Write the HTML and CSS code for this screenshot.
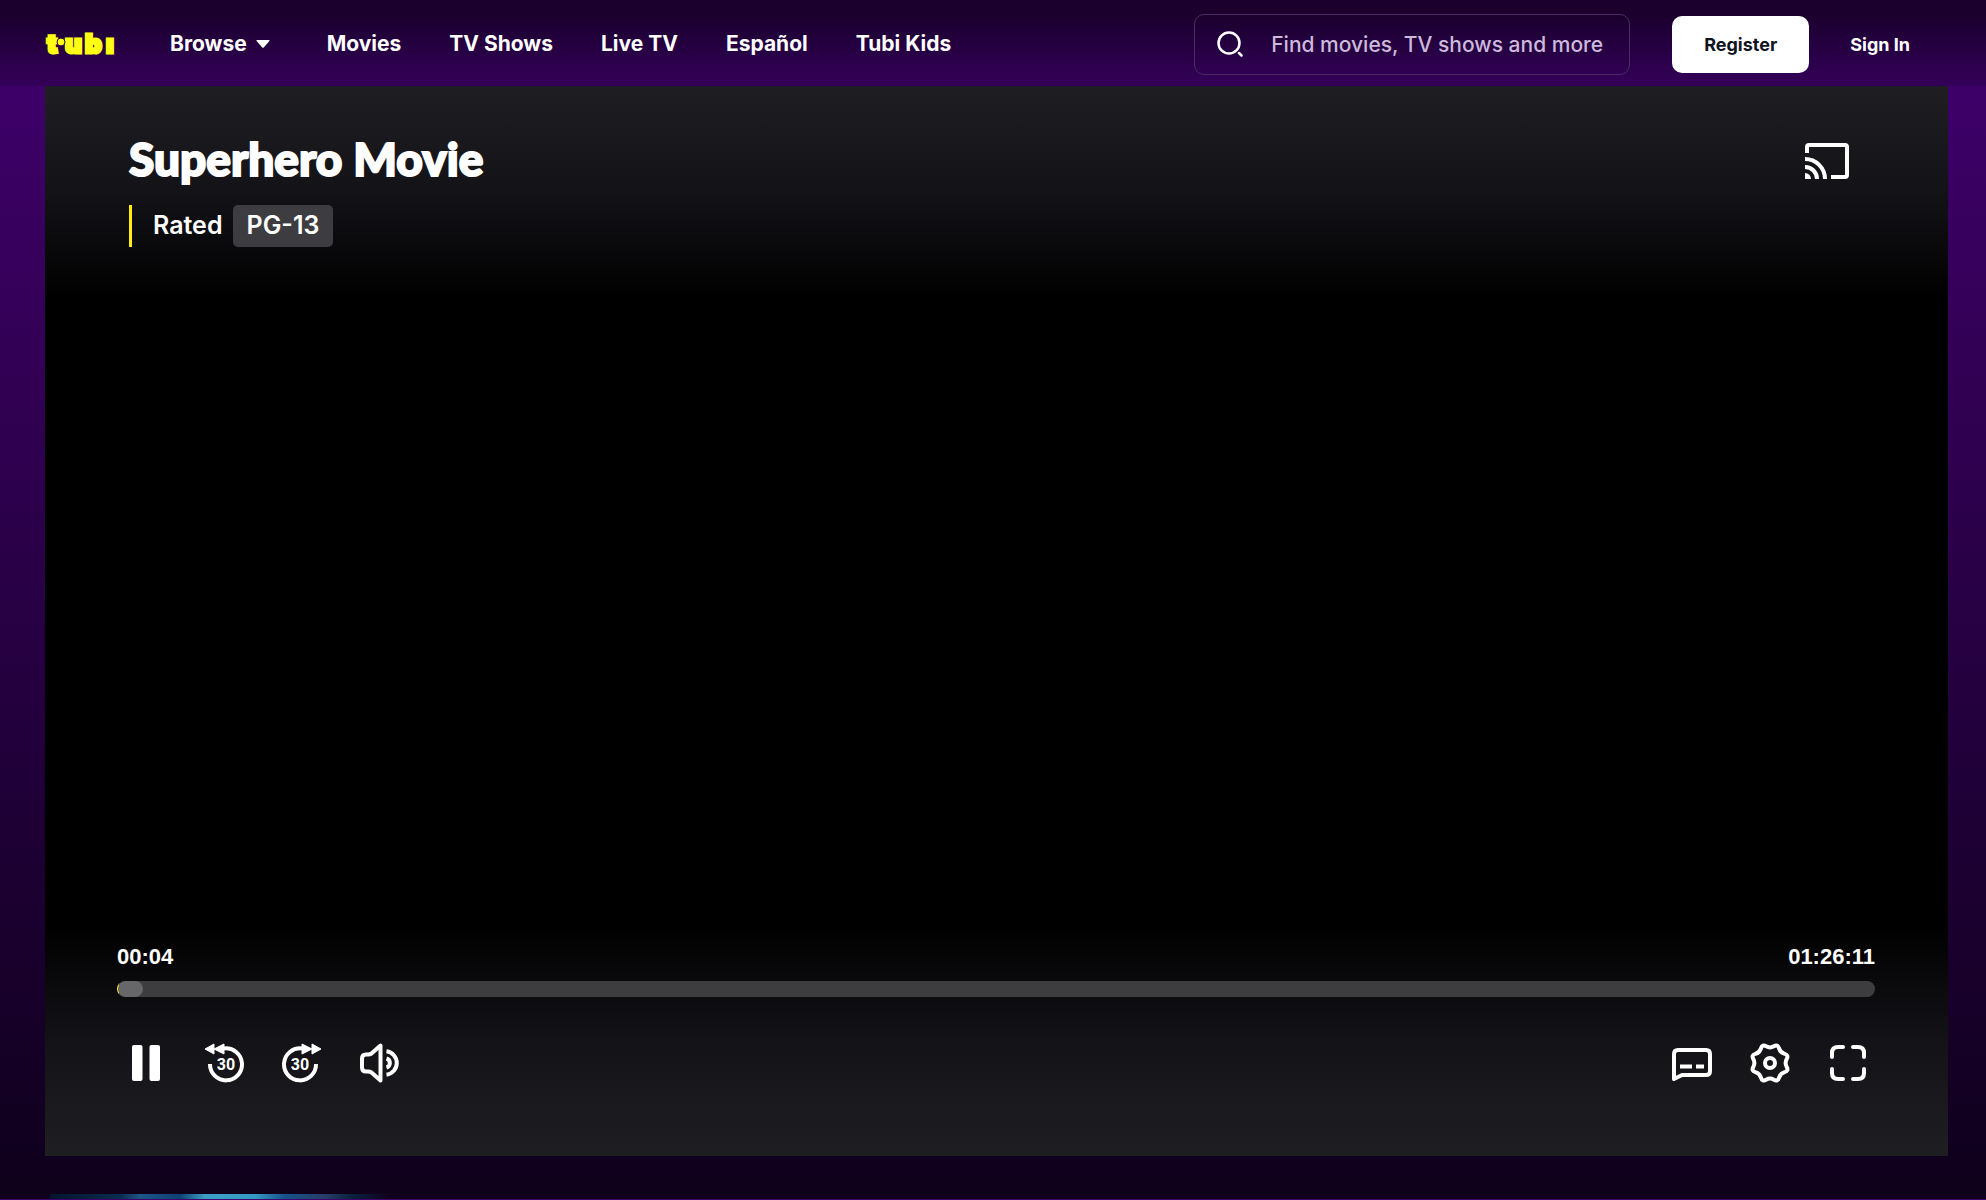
FILE: index.html
```html
<!DOCTYPE html>
<html lang="en">
<head>
<meta charset="utf-8">
<meta name="viewport" content="width=device-width, initial-scale=1">
<title>Superhero Movie</title>
<link rel="stylesheet" href="styles.css">
</head>
<body>
<header class="header">
  <a class="logo" href="#" aria-label="Tubi home">
    <svg width="72" height="44" viewBox="0 0 72 44" aria-hidden="true">
      <g class="logo-text"><text x="2" y="31">t</text><text x="20" y="31">u</text><text x="40" y="31">b</text><text x="61" y="31">ı</text></g>
      <circle class="logo-dot" cx="16" cy="20" r="4"/>
    </svg>
  </a>
  <nav class="nav">
    <a class="nav-link" href="#">Browse
      <svg width="14" height="8" viewBox="0 0 14 8" aria-hidden="true"><path d="M1 0h12q1 0 .4.9L8 7.300q-1 1-2 0L.6.9Q0 0 1 0z" fill="currentColor"/></svg>
    </a>
    <a class="nav-link" href="#">Movies</a>
    <a class="nav-link" href="#">TV Shows</a>
    <a class="nav-link" href="#">Live TV</a>
    <a class="nav-link" href="#">Español</a>
    <a class="nav-link" href="#">Tubi Kids</a>
  </nav>
  <label class="search">
    <svg width="26" height="26" viewBox="0 0 26 26" fill="none" stroke="currentColor" stroke-width="2.500" aria-hidden="true"><circle cx="12" cy="12" r="10.500"/><path d="M22 22l2.500 2.500" stroke-linecap="round"/></svg>
    <input class="search-input" type="text" aria-label="Search" placeholder="Find movies, TV shows and more">
  </label>
  <button class="register" type="button">Register</button>
  <a class="sign-in" href="#">Sign In</a>
</header>

<main>
  <section class="player" aria-label="Video player">
    <div class="player-top">
      <div>
        <h1 class="title">Superhero Movie</h1>
        <p class="rating">Rated <span class="badge">PG-13</span></p>
      </div>
      <button class="icon-button cast" type="button" aria-label="Cast">
        <svg width="44" height="36" viewBox="0 0 44 36" fill="none" stroke="currentColor" stroke-width="4" aria-hidden="true"><path d="M2 10V4q0-2 2-2h36q2 0 2 2v28q0 2-2 2H26M0 16a20 20 0 0 1 20 20M0 24a12 12 0 0 1 12 12"/><path d="M0 30a6 6 0 0 1 6 6H0z" fill="currentColor" stroke="none"/></svg>
      </button>
    </div>

    <div class="player-bottom">
      <div class="times"><span>00:04</span><span>01:26:11</span></div>
      <input class="progress" type="range" min="0" max="5171" value="4" aria-label="Seek">
      <div class="controls">
        <div class="control-group">
          <button class="icon-button" type="button" aria-label="Pause">
            <svg width="40" height="40" viewBox="0 0 40 40" fill="currentColor" aria-hidden="true"><rect x="6" y="2" width="10.500" height="36" rx="2"/><rect x="23.500" y="2" width="10.500" height="36" rx="2"/></svg>
          </button>
          <button class="icon-button" type="button" aria-label="Rewind 30 seconds">
            <svg width="40" height="40" viewBox="0 0 40 40" aria-hidden="true"><path d="M20 5.500A16 16 0 1 1 6 21" class="line"/><path d="M1 6l9-5v10zM10 6l10-5v10z" class="solid"/><text class="skip-text" x="22" y="27">30</text></svg>
          </button>
          <button class="icon-button" type="button" aria-label="Forward 30 seconds">
            <svg width="40" height="40" viewBox="0 0 40 40" aria-hidden="true"><path d="M20 5.500A16 16 0 1 0 34 21" class="line"/><path d="M39 6l-9-5v10zM30 6l-10-5v10z" class="solid"/><text class="skip-text" x="18" y="27">30</text></svg>
          </button>
          <button class="icon-button" type="button" aria-label="Volume">
            <svg width="40" height="40" viewBox="0 0 40 40" aria-hidden="true"><path d="M20.500 2.500v35l-9-8Q10 28.500 8 28.500H6Q2 28.500 2 24.500v-9Q2 11.500 6 11.500h2q2 0 3.500-1z" class="line"/><path d="M26.500 8.300a11.800 11.800 0 0 1 0 23.400" class="line"/><path d="M26.500 15.500a4.700 4.700 0 0 1 0 9" class="line"/></svg>
          </button>
        </div>
        <div class="control-group">
          <button class="icon-button" type="button" aria-label="Subtitles">
            <svg width="40" height="40" viewBox="0 0 40 40" aria-hidden="true"><path d="M2 36V11q0-4 4-4h28q4 0 4 4v17q0 4-4 4H10z" class="line"/><path d="M8 23.500h12M24 23.500h8" class="line"/></svg>
          </button>
          <button class="icon-button" type="button" aria-label="Settings">
            <svg width="40" height="40" viewBox="-20 -20 40 40" aria-hidden="true"><path class="line" d="M16.700 3.900Q18.900 7.800 14.600 9.050Q10.300 10.300 9.050 14.600Q7.800 18.900 3.900 16.700Q0 14.500-3.900 16.700Q-7.800 18.900-9.050 14.600Q-10.300 10.300-14.600 9.050Q-18.900 7.800-16.700 3.900Q-14.500 0-16.700-3.900Q-18.900-7.800-14.600-9.050Q-10.300-10.300-9.050-14.600Q-7.800-18.900-3.900-16.700Q0-14.500 3.900-16.700Q7.800-18.900 9.050-14.600Q10.300-10.300 14.600-9.050Q18.900-7.800 16.700-3.900Q14.500 0 16.700 3.900z"/><circle class="line" r="5"/></svg>
          </button>
          <button class="icon-button" type="button" aria-label="Full screen">
            <svg width="40" height="40" viewBox="0 0 40 40" aria-hidden="true"><path class="line" stroke-linecap="round" d="M4 14v-4q0-6 6-6h5M25 4h5q6 0 6 6v4M36 26v4q0 6-6 6h-5M15 36h-5q-6 0-6-6v-4"/></svg>
          </button>
        </div>
      </div>
    </div>
  </section>
  <section class="artwork" aria-label="Artwork"></section>
</main>
</body>
</html>
```
FILE: styles.css
```css
* {
  box-sizing: border-box;
}

body {
  margin: 0;
  color: #fff;
  font-family: Inter, "Liberation Sans", sans-serif;
  background: linear-gradient(#400070, #390060 200px, #10001e 1160px, #0f001b 1200px) #0f001b;
}

a {
  color: inherit;
  text-decoration: none;
}

.header {
  display: flex;
  align-items: center;
  height: 86px;
  padding: 2px 76px 0 45px;
  background: linear-gradient(#1b002d 15px, #24003f 50%, #340059);
}

.logo {
  display: flex;
  margin-right: 53px;
  fill: #ffff13;
}

.logo-text {
  font: 900 26px Inter, sans-serif;
  stroke: #ffff13;
  stroke-width: 3px;
}

.logo-dot {
  stroke: #28004a;
  stroke-width: 1px;
}

.nav {
  display: flex;
  flex: 1;
  gap: 48px;
}

.nav-link {
  display: flex;
  align-items: center;
  gap: 9px;
  font-size: 21px;
  font-weight: 700;
  line-height: 28px;
  white-space: nowrap;
}

.nav-link:first-child {
  margin-right: 9px;
}

.search {
  display: flex;
  align-items: center;
  gap: 28px;
  width: 436px;
  height: 61px;
  margin-right: 42px;
  padding: 0 8px 0 22px;
  border: 1px solid #4c2a66;
  border-radius: 10px;
}

.search svg {
  flex: none;
}

.search-input {
  flex: 1;
  min-width: 0;
  padding: 0;
  border: 0;
  outline: 0;
  background: none;
  color: #fff;
  font: 500 21px Inter, sans-serif;
}

.search-input::placeholder {
  color: #cdb9dc;
  opacity: 1;
}

.register {
  width: 137px;
  height: 57px;
  margin-right: 41px;
  padding: 0;
  border: 0;
  border-radius: 10px;
  background: #fff;
  color: #10141f;
  font: 700 18px Inter, sans-serif;
}

.sign-in {
  font-size: 18px;
  font-weight: 700;
  white-space: nowrap;
}

.player {
  display: flex;
  flex-direction: column;
  justify-content: space-between;
  aspect-ratio: 16 / 9;
  margin: 0 38px 0 45px;
  background: #000;
}

.player-top {
  display: flex;
  justify-content: space-between;
  align-items: flex-start;
  height: 214px;
  padding: 47px 99px 0 84px;
  background: linear-gradient(#1e1e23, #131217 50%, #000);
}

.title {
  margin: 0 0 20px;
  font: 900 46px/52px Lato, sans-serif;
  -webkit-text-stroke: 2px #fff;
}

.rating {
  display: flex;
  gap: 10px;
  height: 42px;
  margin: 0;
  padding-left: 21px;
  border-left: 3px solid #ffed13;
  font-size: 25px;
  font-weight: 600;
  line-height: 40px;
}

.badge {
  padding: 0 14px;
  border-radius: 5px;
  background: #3d3d41;
}

.icon-button {
  display: flex;
  padding: 0;
  border: 0;
  background: none;
  color: #fff;
}

.cast {
  margin-top: 10px;
}

.player-bottom {
  padding: 20px 73px 73px 72px;
  background: linear-gradient(#000, #131217 50%, #1f1e23);
}

.times {
  display: flex;
  justify-content: space-between;
  margin-bottom: 10px;
  font: 700 22px/28px "Liberation Sans", sans-serif;
}

.progress {
  display: block;
  appearance: none;
  width: 100%;
  height: 16px;
  margin: 0 0 46px;
  border-radius: 8px;
  background: linear-gradient(90deg, #ffed13 2px, #3d3d3f 2px);
  overflow: hidden;
}

.progress::-webkit-slider-thumb {
  appearance: none;
  width: 25px;
  height: 16px;
  border-radius: 8px;
  background: #67676a;
}

.controls {
  display: flex;
  justify-content: space-between;
  padding: 0 7px 0 9px;
}

.control-group {
  display: flex;
  gap: 38px;
}

.line {
  fill: none;
  stroke: currentColor;
  stroke-width: 4px;
  stroke-linejoin: round;
}

.solid {
  fill: currentColor;
  stroke: currentColor;
  stroke-width: 1px;
  stroke-linejoin: round;
}

.skip-text {
  fill: currentColor;
  font: 700 16px Roboto, sans-serif;
  text-anchor: middle;
}

.artwork {
  height: 5px;
  margin: 38px 0 0 50px;
  background: linear-gradient(90deg, #04142e, #0b2c4d 70px, #1e5687 90px, #0d4272 130px, #3b9fc4 155px, #359ac2 205px, #14538a 235px, #273e66 275px, #0a2440 300px, #0f001b 340px);
}
```
